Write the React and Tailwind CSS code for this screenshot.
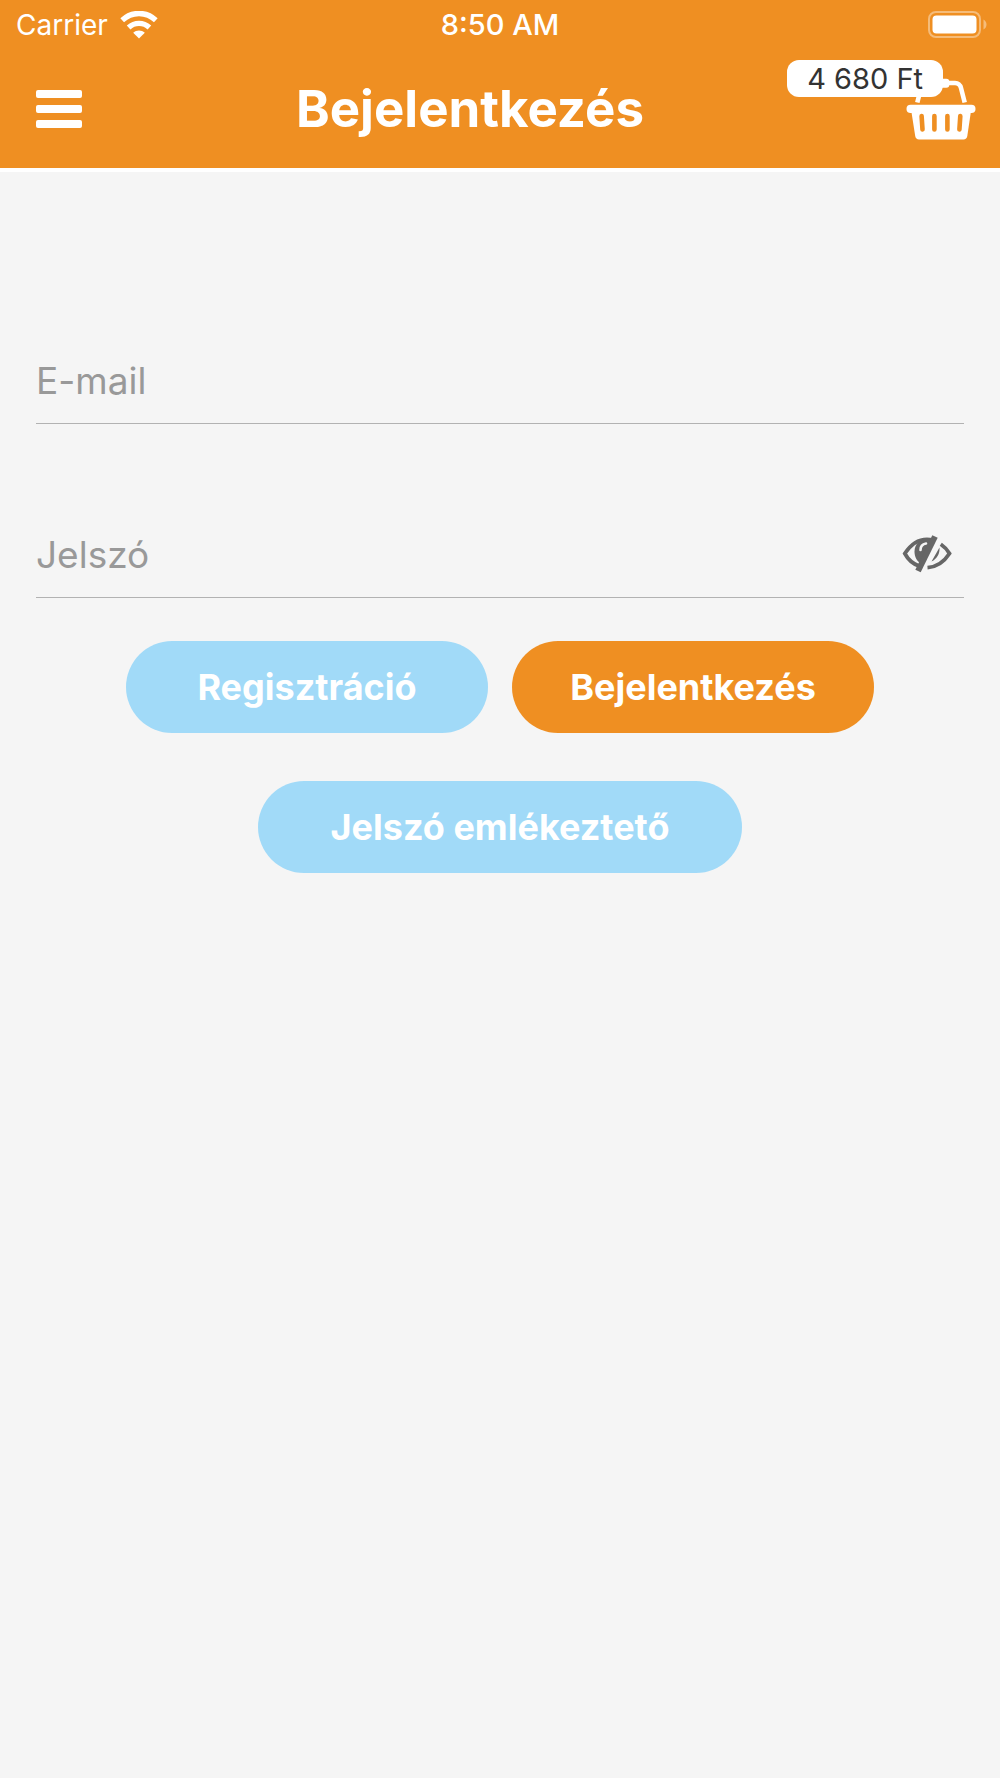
import { useState } from "react";

const WifiIcon = () => (
  <svg width="38" height="28" viewBox="0 0 38 28" fill="none" aria-hidden="true">
    <path d="M2.2 9.2C11.8.2 26.2.2 35.8 9.2" stroke="white" strokeWidth="5.4" />
    <path d="M8.6 16.4c6-5.4 14.8-5.4 20.8 0" stroke="white" strokeWidth="5.4" />
    <path d="M13.2 21.8c3.4-3.2 8.2-3.2 11.6 0L19 27.6Z" fill="white" />
  </svg>
);

const BatteryIcon = () => (
  <svg width="60" height="28" viewBox="0 0 60 28" fill="none" aria-hidden="true">
    <rect x="1" y="1" width="51" height="25" rx="7" stroke="white" strokeOpacity="0.4" strokeWidth="2" />
    <rect x="4.5" y="4.5" width="44" height="18" rx="4" fill="white" />
    <path d="M55.5 8.5c4 2 4 8 0 10Z" fill="white" fillOpacity="0.4" />
  </svg>
);

const MenuIcon = () => (
  <svg width="46" height="38" viewBox="0 0 46 38" fill="white" aria-hidden="true">
    <rect width="46" height="8" rx="2" />
    <rect y="15" width="46" height="8" rx="2" />
    <rect y="30" width="46" height="8" rx="2" />
  </svg>
);

const BasketIcon = () => (
  <svg width="70" height="62" viewBox="0 -2 70 62" fill="none" aria-hidden="true">
    <path
      d="M11.3 22.5 15 8C16 4.4 17.5 3 21 3h28c3.5 0 5 1.4 6 5l3.7 14.5"
      stroke="white"
      strokeWidth="4.6"
    />
    <rect x="28" y="-1.3" width="15.3" height="9" rx="3" fill="white" />
    <rect x="0.5" y="24.7" width="69" height="8.3" rx="4.1" fill="white" />
    <path d="M5.3 31H65l-3.7 25c-.4 2.4-1.6 3.4-3.8 3.4H13c-2.2 0-3.4-1-3.8-3.4Z" fill="white" />
    <path
      d="m15.6 36 .9 13.500M28.4 36v13.500M41.4 36v13.500M54.300 36l-.9 13.500"
      stroke="#ef8f22"
      strokeWidth="4.6"
      strokeLinecap="round"
    />
  </svg>
);

const EyeOffIcon = () => (
  <svg width="50" height="38" viewBox="0 0 50 38" fill="none" aria-hidden="true">
    <path d="M31 5C20 2.5 10 7.5 2.8 18.5 6 24.5 11 29 17.5 31.2" stroke="#666" strokeWidth="3.8" />
    <path d="M30 4C20 2.5 12.500 8 12.500 16.500c0 5.500 2.500 10 7 12.500Z" fill="#666" />
    <path d="M18.5 15c0-3.600 2-5.900 5.500-6.500" stroke="#f5f5f5" strokeWidth="2.6" strokeLinecap="round" />
    <path d="M33 1.5 16 36" stroke="#666" strokeWidth="6" />
    <path d="M38.8 9.2c3.7 2.5 6.7 5.8 8.7 9.3C42 27 34.5 32 25.5 32.6" stroke="#666" strokeWidth="3.8" />
    <path d="M37.5 12.5c.5 6-2.5 11.5-8 14Z" fill="#666" />
  </svg>
);

const inputBase =
  "h-[74px] min-w-0 flex-1 bg-transparent text-[37px] outline-none placeholder:text-[#999]";
const buttonBase = "h-[92px] rounded-full text-4xl font-bold text-white";

const App = () => {
  const [showPassword, setShowPassword] = useState(false);

  return (
    <div className="min-h-screen bg-[#f5f5f5] font-['Inter',sans-serif]">
      <header className="border-b-4 border-white bg-[#ef8f22] text-white">
        {/* Status bar */}
        <div className="grid h-[50px] grid-cols-3 items-center px-3">
          <div className="flex items-center gap-3 pl-1 text-[28px]">
            <span>Carrier</span>
            <WifiIcon />
          </div>
          <span className="text-center text-[29px] font-medium">8:50 AM</span>
          <div className="flex justify-end">
            <BatteryIcon />
          </div>
        </div>

        {/* Title bar */}
        <div className="flex h-[118px] items-center pl-9 pr-6">
          <button type="button" aria-label="Menü">
            <MenuIcon />
          </button>
          <h1 className="flex-1 text-center text-[51px] font-bold">Bejelentkezés</h1>
          <button type="button" className="relative flex w-[118px] justify-end">
            <BasketIcon />
            <span className="absolute right-[33px] -top-[18px] flex h-[37px] items-center whitespace-nowrap rounded-xl bg-white px-5 text-[29px] text-[#333]">
              4 680 Ft
            </span>
          </button>
        </div>
      </header>

      <main className="px-9 pt-[171px]">
        <form onSubmit={(e) => e.preventDefault()}>
          <div className="flex items-center border-b border-[#b2b2b2] pb-1.5">
            <input
              id="email"
              type="email"
              aria-label="E-mail"
              placeholder="E-mail"
              className={inputBase}
            />
          </div>

          <div className="mt-[93px] flex items-center border-b border-[#b2b2b2] pb-1.5 pr-3">
            <input
              id="password"
              type={showPassword ? "text" : "password"}
              aria-label="Jelszó"
              placeholder="Jelszó"
              className={inputBase}
            />
            <button
              type="button"
              aria-label="Jelszó mutatása"
              onClick={() => setShowPassword(!showPassword)}
            >
              <EyeOffIcon />
            </button>
          </div>

          <div className="mt-[43px] flex justify-center gap-6">
            <button type="button" className={`${buttonBase} w-[362px] bg-[#a1daf8]`}>
              Regisztráció
            </button>
            <button type="submit" className={`${buttonBase} w-[362px] bg-[#ef8f22]`}>
              Bejelentkezés
            </button>
          </div>

          <div className="mt-12 flex justify-center">
            <button type="button" className={`${buttonBase} w-[484px] bg-[#a1daf8]`}>
              Jelszó emlékeztető
            </button>
          </div>
        </form>
      </main>
    </div>
  );
};

export default App;
